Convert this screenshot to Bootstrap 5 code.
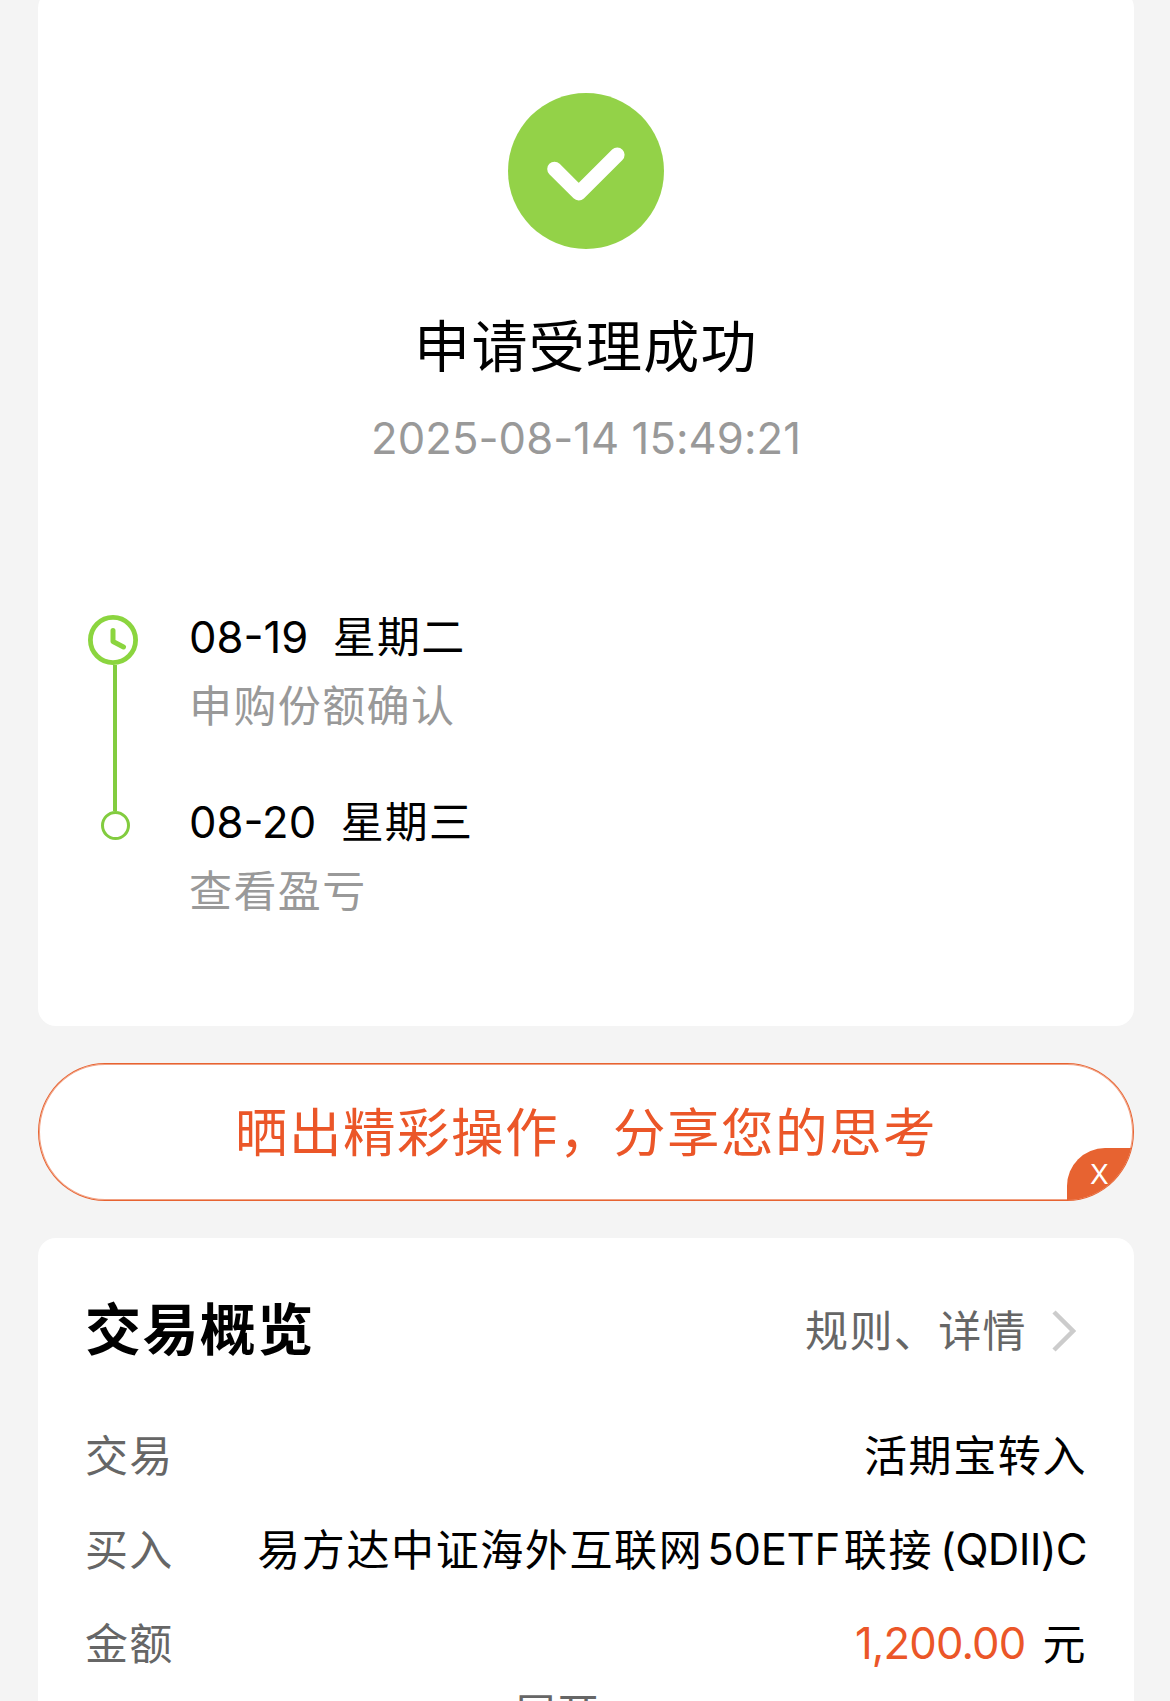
<!DOCTYPE html>
<html lang="zh-CN">
<head>
<meta charset="utf-8">
<meta name="viewport" content="width=device-width, initial-scale=1">
<title>申请受理成功</title>
<link href="https://cdn.jsdelivr.net/npm/bootstrap@5.3.0/dist/css/bootstrap.min.css" rel="stylesheet">
<style>
  html, body { height: 1701px; overflow: hidden; }
  body { background: #f4f4f4; color: #000; font-family: Inter, "Noto Sans CJK SC", sans-serif; font-size: 43px; line-height: 50px; }
  .page { padding: 0 36px 0 38px; }
  .panel { background: #fff; border: 0; border-radius: 18px; color: #000; }
  .result { height: 1036px; margin-top: -10px; padding: 103px 50px 0; }
  .done-icon { width: 156px; height: 156px; margin-bottom: 66px; }
  .result-title { font-size: 56px; line-height: 64px; letter-spacing: 1.3px; margin: 0 0 35px; font-weight: 400; }
  .stamp { color: #999; font-size: 43.6px; letter-spacing: .06px; }
  .steps { margin-top: 148px; }
  .rail { width: 50px; padding-top: 3px; margin-right: 51px; }
  .rail-line { width: 4px; height: 146px; margin-left: 25px; background: #82cc3f; }
  .rail-dot { width: 29px; height: 29px; margin-left: 13px; border: 3px solid #82cc3f; border-radius: 50%; }
  .step + .step { margin-top: 66px; }
  .step-date { margin-bottom: 18px; white-space: pre; letter-spacing: 1.2px; }
  .step-date .num { font-size: 43.6px; letter-spacing: 0; }
  .step-note { color: #999; letter-spacing: 1.4px; }
  .share { height: 138px; margin: 37px 0; background: #fff; border: 1px solid #e76331; box-shadow: inset 0 0 0 1px rgba(231,99,49,.6); border-radius: 67px / 69px; color: #eb5628; font-size: 52.5px; letter-spacing: 1.5px; overflow: hidden; }
  .share > span { padding-top: 2px; }
  .share-close { right: -1px; bottom: -1px; width: 67px; height: 53px; border: 0; padding: 0 2px 0 0; background: #e76331; border-radius: 38px 0 0 0; color: #fff; font-size: 27.5px; line-height: 51px; font-weight: 400; letter-spacing: 0; text-align: center; }
  .overview { height: 520px; padding: 59px 47px 0 48px; border-radius: 18px 18px 0 0; }
  .overview h2 { font-size: 56px; line-height: 66px; font-weight: 700; letter-spacing: 1.4px; margin: 0 0 0 -1px; }
  .more { color: #666; letter-spacing: 1.4px; padding-top: 1px; }
  .more svg { width: 24px; height: 44px; margin: 0 11px 0 25px; }
  .facts { margin: 68px 0 0; }
  .facts > div { height: 94px; }
  .facts dt { color: #666; font-weight: 400; letter-spacing: 1.2px; margin-left: -1px; }
  .facts dd { margin: 0; letter-spacing: 1.6px; white-space: nowrap; }
  .facts .lat { font-size: 43.6px; letter-spacing: -.3px; vertical-align: 1px; }
  .facts .tight { letter-spacing: -.7px; margin-left: 7px; }
  .facts .money { color: #eb5628; letter-spacing: -.85px; }
  .unit { margin-left: 17px; }
  .expand { color: #666; margin: -24px 60px 0 0; text-align: center; }
</style>
</head>
<body>
<main class="page">
  <section class="card panel result">
    <div class="d-flex flex-column align-items-center">
      <svg class="done-icon" viewBox="0 0 156 156" aria-hidden="true">
        <circle cx="78" cy="78" r="78" fill="#93d248"/>
        <path d="M46.5 76 L70.7 100.2 L109.3 61.8" fill="none" stroke="#fff" stroke-width="14.6" stroke-linecap="round" stroke-linejoin="round"/>
      </svg>
      <h1 class="result-title">申请受理成功</h1>
      <div class="stamp">2025-08-14 15:49:21</div>
    </div>
    <div class="steps d-flex">
      <div class="rail d-flex flex-column flex-shrink-0">
        <svg width="50" height="50" viewBox="0 0 50 50" fill="none" stroke="#8bd53f" aria-hidden="true">
          <circle cx="25" cy="25" r="22.6" stroke-width="4.8"/>
          <path d="M25 15.5 V26.5 L35.5 32" stroke-width="5" stroke-linecap="round" stroke-linejoin="round"/>
        </svg>
        <div class="rail-line"></div>
        <div class="rail-dot"></div>
      </div>
      <div>
        <div class="step">
          <div class="step-date"><span class="num">08-19  </span>星期二</div>
          <div class="step-note">申购份额确认</div>
        </div>
        <div class="step">
          <div class="step-date"><span class="num">08-20  </span>星期三</div>
          <div class="step-note">查看盈亏</div>
        </div>
      </div>
    </div>
  </section>

  <div class="share position-relative d-flex align-items-center justify-content-center">
    <span>晒出精彩操作，分享您的思考</span>
    <button class="share-close position-absolute" type="button">X</button>
  </div>

  <section class="card panel overview">
    <div class="d-flex justify-content-between align-items-center">
      <h2>交易概览</h2>
      <div class="more d-flex align-items-center">
        <span>规则、详情</span>
        <svg viewBox="0 0 24 44" fill="none" stroke="#ccc" stroke-width="4.5" aria-hidden="true"><path d="M2 3 L21 22 L2 41"/></svg>
      </div>
    </div>
    <dl class="facts">
      <div class="d-flex justify-content-between"><dt>交易</dt><dd>活期宝转入</dd></div>
      <div class="d-flex justify-content-between"><dt>买入</dt><dd>易方达中证海外互联网<span class="lat ms-1">50ETF</span><span class="ms-1">联接</span><span class="lat tight">(QDII)C</span></dd></div>
      <div class="d-flex justify-content-between"><dt>金额</dt><dd><span class="lat money">1,200.00</span><span class="unit">元</span></dd></div>
    </dl>
    <div class="expand">展开</div>
  </section>
</main>
<script src="https://cdn.jsdelivr.net/npm/bootstrap@5.3.0/dist/js/bootstrap.bundle.min.js"></script>
</body>
</html>
